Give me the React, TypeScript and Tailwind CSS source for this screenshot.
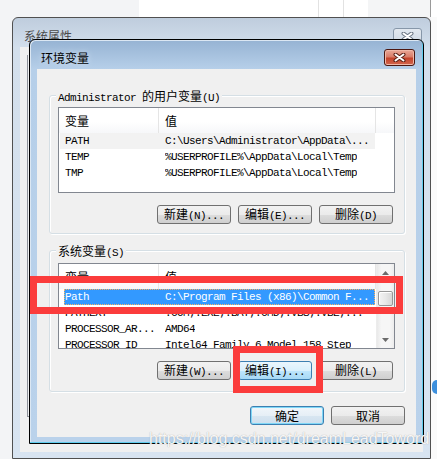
import clsx from "clsx";

const mono =
  "font-['Liberation_Mono','Noto_Sans_CJK_SC',monospace] text-[11px] tracking-[-0.6px]";
const cjk =
  "font-['Noto_Sans_CJK_SC','Liberation_Sans',sans-serif] text-[12px] tracking-normal";

type Variant = "normal" | "hover" | "default";

const btnStyles: Record<Variant, string> = {
  normal:
    "border-[#707070] bg-[linear-gradient(#f2f2f2_0%,#ebebeb_50%,#dddddd_51%,#cfcfcf_100%)]",
  hover:
    "border-[#3c7fb1] bg-[linear-gradient(#eaf6fd_0%,#d9f0fc_50%,#bee6fd_51%,#a7d9f5_100%)]",
  default:
    "border-[#3c7fb1] shadow-[inset_0_0_0_1px_#7fd7f7] bg-[linear-gradient(#f1f6fa_0%,#e6eff6_50%,#d8e6f1_51%,#cddfee_100%)]",
};

function Button({ zh, en, variant = "normal" }: { zh: string; en?: string; variant?: Variant }) {
  return (
    <div
      className={clsx(
        "flex h-[19px] w-[74px] items-center justify-center rounded-[3px] border text-black",
        btnStyles[variant]
      )}
    >
      <span className="whitespace-pre leading-[15px]">
        <span className={cjk}>{zh}</span>
        {en && <span className={mono}>{en}</span>}
      </span>
    </div>
  );
}

type Row = { name: string; value: string; state?: "inactive" | "selected" };

function ListRow({ row }: { row: Row }) {
  return (
    <div
      className={clsx(
        "flex h-[16px] shrink-0 items-center whitespace-pre",
        mono,
        row.state === "inactive" && "ml-[1px] w-[315px] bg-[#f2f2f2] pl-[5px] text-black",
        row.state === "selected" &&
          "ml-[5px] w-[311px] bg-[#3399ff] pl-[1px] text-white outline-1 outline-dotted -outline-offset-1 outline-[#ffb35c]",
        !row.state && "pl-[6px] text-black"
      )}
    >
      <span className="w-[100px] shrink-0 overflow-hidden">{row.name}</span>
      <span className="overflow-hidden">{row.value}</span>
    </div>
  );
}

function Arrow({ down }: { down?: boolean }) {
  return (
    <svg width="7" height="4" viewBox="0 0 7 4">
      <path d={down ? "M0 0 L7 0 L3.5 4 Z" : "M0 4 L7 4 L3.5 0 Z"} fill="#6b6b6b" />
    </svg>
  );
}

function Scrollbar() {
  return (
    <div className="flex w-[18px] shrink-0 flex-col items-center border-l border-[#ececec] bg-[linear-gradient(90deg,#e9e9e9,#f6f6f6_25%,#f6f6f6_75%,#ececec)]">
      <div className="flex h-[17px] w-full shrink-0 items-center justify-center">
        <Arrow />
      </div>
      <div className="mt-[10px] h-[15px] w-[15px] shrink-0 rounded-[2px] border border-[#979797] bg-[linear-gradient(90deg,#f3f3f3,#e8e8e8_50%,#d6d6d6)] shadow-[inset_1px_1px_0_#fff]" />
      <div className="flex-1" />
      <div className="flex h-[17px] w-full shrink-0 items-center justify-center">
        <Arrow down />
      </div>
    </div>
  );
}

function VarList({ rows, scrollbar }: { rows: Row[]; scrollbar?: boolean }) {
  return (
    <div className="flex h-[86px] w-[337px] overflow-hidden border border-[#828790] bg-white">
      <div className="flex min-w-0 flex-1 flex-col overflow-hidden">
        <div className="flex h-[25px] shrink-0 bg-[linear-gradient(#ffffff,#ffffff_55%,#f6f7f9)]">
          <div className="flex h-full w-[100px] shrink-0 items-center border-r border-[#e5e5e5] pl-[6px]">
            <span className={cjk}>变量</span>
          </div>
          <div className="flex h-full w-[217px] shrink-0 items-center border-r border-[#e5e5e5] pl-[6px]">
            <span className={cjk}>值</span>
          </div>
          <div className="flex-1" />
        </div>
        {rows.map((r) => (
          <ListRow key={r.name} row={r} />
        ))}
      </div>
      {scrollbar && <Scrollbar />}
    </div>
  );
}

function GroupBox({ label, children }: { label: React.ReactNode; children: React.ReactNode }) {
  return (
    <div className="relative w-[356px] rounded-[3px] border border-[#d5dfe5] shadow-[inset_1px_1px_0_#ffffff,1px_1px_0_#ffffff] pl-[8px]">
      <span className="absolute -top-[9px] left-[6px] whitespace-pre bg-[#f0f0f0] px-[2px] leading-[16px] text-black">
        {label}
      </span>
      {children}
    </div>
  );
}

function CloseX({ color }: { color: string }) {
  return (
    <svg width="13" height="9" viewBox="0 0 13 9">
      <path d="M2.5 1.5 L10.5 7.5 M10.5 1.5 L2.5 7.5" stroke={color} strokeWidth="4" strokeLinecap="round" />
      <path d="M2.5 1.5 L10.5 7.5 M10.5 1.5 L2.5 7.5" stroke="#ffffff" strokeWidth="2" strokeLinecap="round" />
    </svg>
  );
}

const userVars: Row[] = [
  { name: "PATH", value: "C:\\Users\\Administrator\\AppData\\...", state: "inactive" },
  { name: "TEMP", value: "%USERPROFILE%\\AppData\\Local\\Temp" },
  { name: "TMP", value: "%USERPROFILE%\\AppData\\Local\\Temp" },
];

const sysVars: Row[] = [
  { name: "Path", value: "C:\\Program Files (x86)\\Common F...", state: "selected" },
  { name: "PATHEXT", value: ".COM;.EXE;.BAT;.CMD;.VBS;.VBE;..." },
  { name: "PROCESSOR_AR...", value: "AMD64" },
  { name: "PROCESSOR_ID", value: "Intel64 Family 6 Model 158 Step" },
];

export default function App() {
  return (
    <div className="relative h-[459px] w-[437px] overflow-hidden bg-[#f3f4f6]">
      {/* desktop behind the dialogs */}
      <div className="flex h-[17px]">
        <div className="w-[139px] bg-[#f3f4f6]" />
        <div className="w-[179px] bg-white" />
        <div className="w-px bg-[#e2e2e2]" />
        <div className="w-[24px] bg-white" />
        <div className="w-px bg-[#e2e2e2]" />
        <div className="w-[24px] bg-white" />
        <div className="w-[62px] bg-[#f4f5f6]" />
        <div className="w-px bg-[#9a9a9a]" />
        <div className="flex-1 bg-white" />
      </div>
      <div className="flex h-[442px]">
        <div className="flex-1 bg-[#f3f4f6]" />
        <div className="w-[6px] bg-[#fafafa]" />
      </div>
      <div className="absolute left-[432px] top-[380px] h-[14px] w-[10px] rounded-full bg-[#3d8fdc]" />

      {/* 系统属性 (inactive, behind) */}
      <div className="absolute left-[12px] top-[17px] flex h-[442px] w-[419px] flex-col rounded-t-[6px] border border-[#505050] bg-[linear-gradient(#bfcddd,#d3dfec_30px,#d8e4f1)] px-[7px] pb-[6px]">
        <div className="flex h-[29px] shrink-0 items-start justify-between pl-[4px] pr-[1px] pt-[10px]">
          <span className={clsx(cjk, "mt-[1px] leading-[14px] text-[#4a4a4a]")}>系统属性</span>
          <div className="flex h-[17px] w-[29px] items-center justify-center rounded-[3px] border border-[#8797a9] bg-[linear-gradient(#e3e9f0,#cdd8e4)]">
            <CloseX color="#6d7886" />
          </div>
        </div>
        <div className="flex-1 bg-[#f0f0f0] pl-[7px] pt-[8px]">
          <div className="h-[362px] w-[20px] border-b border-l border-[#8e9199]" />
        </div>
      </div>

      {/* 环境变量 */}
      <div className="absolute left-[29px] top-[39px] flex h-[405px] w-[395px] flex-col rounded-t-[6px] border border-black bg-[linear-gradient(#96b3d3,#b6cfe9_29px,#bad2eb)] px-[7px] pb-[6px] shadow-[inset_-1px_-1px_0_#5fcdee,inset_1px_1px_0_#dbe7f3]">
        <div className="flex h-[29px] shrink-0 items-center justify-between pl-[4px] pr-[1px] pt-[6px]">
          <span className={clsx(cjk, "leading-[16px] text-black [text-shadow:0_0_6px_#dfeaf6]")}>环境变量</span>
          <div className="flex h-[17px] w-[31px] items-center justify-center rounded-[3px] border border-[#4b1710] bg-[linear-gradient(#eaa898,#d97d69_45%,#c4432b_55%,#d2674e)] shadow-[inset_0_0_0_1px_#f0b8a8]">
            <CloseX color="#5a2218" />
          </div>
        </div>
        <div className="flex flex-1 flex-col bg-[#f0f0f0] pl-[12px] pt-[26px]">
          <GroupBox
            label={
              <>
                <span className={mono}>Administrator </span>
                <span className={cjk}>的用户变量</span>
                <span className={mono}>(U)</span>
              </>
            }
          >
            <div className="pt-[11px]">
              <VarList rows={userVars} />
            </div>
            <div className="mt-[12px] flex justify-end gap-[7px] pb-[9px] pr-[11px]">
              <Button zh="新建" en="(N)..." />
              <Button zh="编辑" en="(E)..." />
              <Button zh="删除" en="(D)" />
            </div>
          </GroupBox>

          <div className="mt-[16px]">
            <GroupBox
              label={
                <>
                  <span className={cjk}>系统变量</span>
                  <span className={mono}>(S)</span>
                </>
              }
            >
              <div className="pt-[12px]">
                <VarList rows={sysVars} scrollbar />
              </div>
              <div className="mt-[12px] flex justify-end gap-[7px] pb-[11px] pr-[11px]">
                <Button zh="新建" en="(W)..." />
                <Button zh="编辑" en="(I)..." variant="hover" />
                <Button zh="删除" en="(L)" />
              </div>
            </GroupBox>
          </div>

          <div className="mt-[14px] flex w-[356px] justify-end gap-[7px]">
            <Button zh="确定" variant="default" />
            <Button zh="取消" />
          </div>
        </div>
      </div>

      {/* red annotation boxes */}
      <div className="absolute left-[30px] top-[276px] h-[38px] w-[373px] border-[7px] border-[#fb3c3c]" />
      <div className="absolute left-[233px] top-[346px] h-[47px] w-[90px] border-[7px] border-[#fb3c3c]" />

      {/* watermark */}
      <div className="absolute left-[149px] top-[430px] whitespace-pre font-['Liberation_Sans',Arial,sans-serif] text-[16px] leading-[18px] text-white/90 [text-shadow:0_0_1px_#9a9a9a]">
        https://blog.csdn.net/dreamLeadToword
      </div>
    </div>
  );
}
